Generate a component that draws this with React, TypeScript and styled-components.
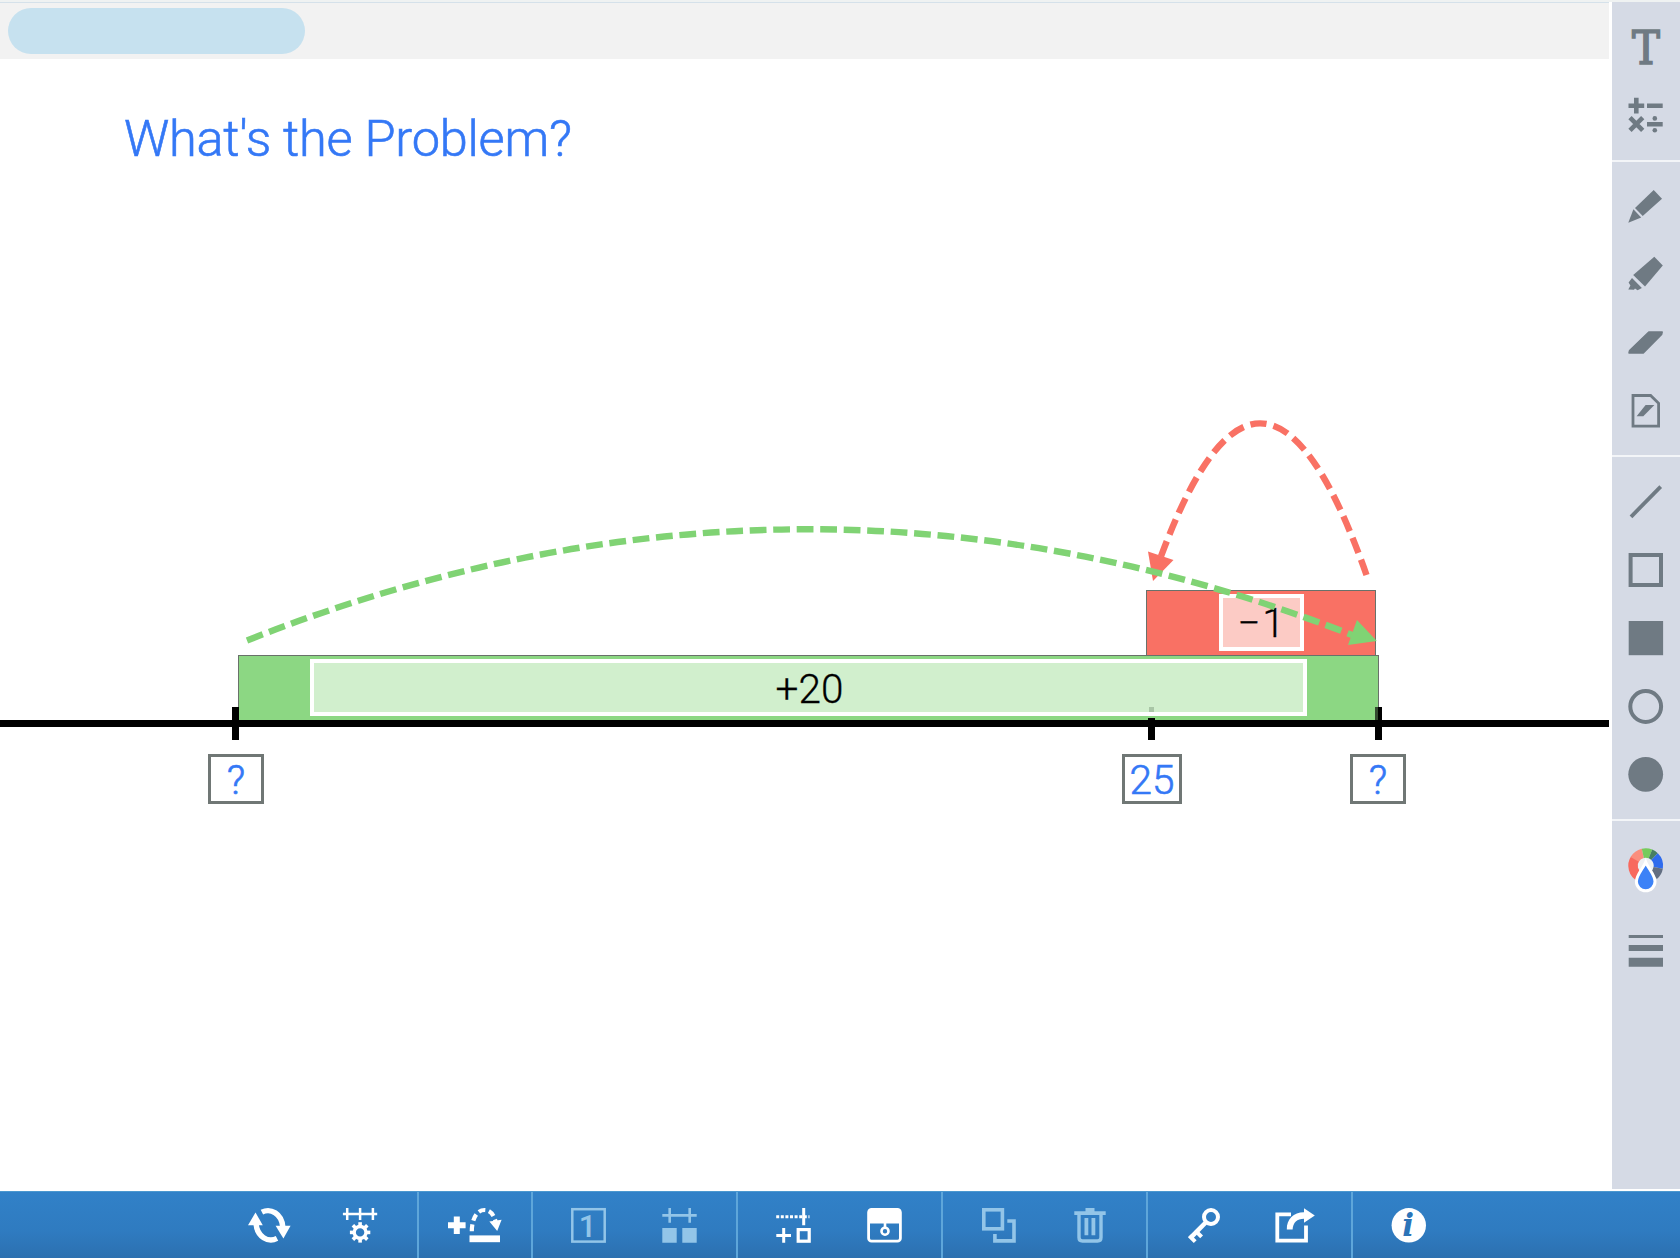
import React from "react";
import styled, { createGlobalStyle, css } from "styled-components";

const GlobalStyle = createGlobalStyle`
  * { box-sizing: border-box; }
  body { margin: 0; background: #fff; font-family: Roboto, "Liberation Sans", sans-serif; }
`;

const ink = "#6f7a83";
const blue = "#3478f6";
const dim = "#93c5e8";
const green = "#80d374";
const red = "#f97164";

const Screen = styled.div`
  display: flex;
  flex-direction: column;
  width: 1680px;
  height: 1258px;
  overflow: hidden;
  background: #fff;
`;

const Workspace = styled.div`
  flex: 1;
  display: flex;
  justify-content: space-between;
  padding: 2px 0;
  background: linear-gradient(#eff2f2 0 2px, #fff 2px);
  min-height: 0;
`;

const Board = styled.main`
  width: 1609px;
  display: flex;
  flex-direction: column;
`;

const Header = styled.header`
  height: 57px;
  padding: 5px 8px;
  background: #f2f2f2;
  border-top: 1px solid #d5e1ea;
`;

const Pill = styled.div`
  width: 297px;
  height: 46px;
  border-radius: 23px;
  background: #c6e1ef;
`;

const Canvas = styled.div`
  position: relative;
  flex: 1;
`;

const Title = styled.h1`
  margin: 0;
  padding: 50px 0 0 124px;
  font-size: 50.5px;
  line-height: 60px;
  font-weight: 300;
  letter-spacing: -0.25px;
  -webkit-text-stroke: 0.6px ${blue};
  color: ${blue};
  white-space: nowrap;
`;

const Axis = styled.div`
  position: absolute;
  left: 0;
  right: 0;
  top: 661px;
  height: 7px;
  background: #000;
`;

const Tick = styled.div<{ $x: number; $top?: number; $w?: number }>`
  position: absolute;
  left: ${(p) => p.$x}px;
  top: ${(p) => p.$top ?? 648}px;
  width: ${(p) => p.$w ?? 7}px;
  height: ${(p) => 681 - (p.$top ?? 648)}px;
  background: #000;
`;

const TickGhost = styled.div<{ $x: number; $w: number; $h: number; $fill: string }>`
  position: absolute;
  left: ${(p) => p.$x}px;
  top: 648px;
  width: ${(p) => p.$w}px;
  height: ${(p) => p.$h}px;
  background: ${(p) => p.$fill};
`;

const Bar = styled.div<{ $x: number; $y: number; $w: number; $h: number; $fill: string }>`
  position: absolute;
  left: ${(p) => p.$x}px;
  top: ${(p) => p.$y}px;
  width: ${(p) => p.$w}px;
  height: ${(p) => p.$h}px;
  display: flex;
  justify-content: center;
  align-items: flex-start;
  padding-top: 3px;
  border: 1px solid #69716a;
  background: ${(p) => p.$fill};
`;

const BarLabel = styled.div<{ $w: number; $fill: string; $nudge?: string; $gap?: number }>`
  width: ${(p) => p.$w}px;
  height: 57px;
  display: flex;
  justify-content: center;
  align-items: center;
  padding: ${(p) => p.$nudge ?? "0"};
  gap: ${(p) => p.$gap ?? 0}px;
  border: 4px solid #fff;
  background: ${(p) => p.$fill};
  font-size: 40.5px;
  line-height: 48px;
  font-weight: 300;
  -webkit-text-stroke: 0.3px #000;
  color: #000;
`;

const ValueBox = styled.div<{ $x: number; $w: number }>`
  position: absolute;
  left: ${(p) => p.$x}px;
  top: 695px;
  width: ${(p) => p.$w}px;
  height: 50px;
  display: flex;
  justify-content: center;
  align-items: center;
  padding-top: 1px;
  border: 3px solid #707775;
  background: #fff;
  font-size: 40.5px;
  line-height: 48px;
  font-weight: 300;
  -webkit-text-stroke: 0.6px ${blue};
  color: ${blue};
`;

const Arcs = styled.svg`
  position: absolute;
  left: 0;
  top: 0;
  display: block;
`;

const Sidebar = styled.aside`
  width: 68px;
  background: #d5dae5;
`;

const ToolGroup = styled.div<{ $pad?: string }>`
  display: flex;
  flex-direction: column;
  padding: ${(p) => p.$pad ?? "11px 0 11px"};
  &:not(:last-child) {
    border-bottom: 2px solid #f3f5f8;
  }
`;

const plainButton = css`
  display: flex;
  align-items: center;
  justify-content: center;
  padding: 0;
  border: 0;
  background: none;
  font-family: inherit;
`;

const ToolButton = styled.button<{ $h?: number }>`
  ${plainButton}
  width: 68px;
  height: ${(p) => p.$h ?? 68}px;
  color: ${ink};
`;

const TextGlyph = styled.span`
  padding-top: 1px;
  font-family: "DejaVu Serif Condensed", "DejaVu Serif", serif;
  font-stretch: condensed;
  font-size: 46.5px;
  line-height: 56px;
  -webkit-text-stroke: 1.5px ${ink};
`;

const Footer = styled.footer`
  height: 67px;
  display: flex;
  justify-content: center;
  padding-right: 4px;
  border-top: 1px solid #4b98cf;
  background: linear-gradient(#3181c8, #2f7bc0 60%, #2c70b0);
`;

const ActionGroup = styled.div`
  display: flex;
  padding: 0 11.5px;
  & + & {
    background: linear-gradient(#5ea6da, #5ea6da) left / 2px 100% no-repeat;
  }
`;

const ActionButton = styled.button<{ $off?: boolean }>`
  ${plainButton}
  width: 91px;
  height: 66px;
  color: ${(p) => (p.$off ? dim : "#fff")};
`;

const SideIcon = ({ children, h = 40 }: { children: React.ReactNode; h?: number }) => (
  <svg width="40" height={h} viewBox={`0 0 40 ${h}`} fill="none" stroke="none">
    {children}
  </svg>
);

const BarIcon = ({ children }: { children: React.ReactNode }) => (
  <svg width="60" height="40" viewBox="0 0 60 40" fill="none">
    {children}
  </svg>
);

const c = "currentColor";

const MathIcon = () => (
  <SideIcon>
    <path
      d="M2.5 10.7H18.2M10.3 2.8V18.5M21 10.7H36.7M21 29.3H36.7M4 22.7L16.7 35.4M16.7 22.7L4 35.4"
      stroke={c}
      strokeWidth="4.6"
    />
    <circle cx="28.8" cy="23.4" r="2.3" fill={c} />
    <circle cx="28.8" cy="35.2" r="2.3" fill={c} />
  </SideIcon>
);
const PencilIcon = () => (
  <SideIcon>
    <path d="M27.7 4L36 12.7L16.7 29.9L9 22Z" fill={c} />
    <path d="M7.4 23.3L15.2 31.5L2.3 36.7Z" fill={c} />
  </SideIcon>
);
const MarkerIcon = () => (
  <SideIcon>
    <path d="M28.3 2.7L36.8 11.5L19 32.5L7.2 20.9Z" fill={c} />
    <path d="M6 24L15.9 34L11.6 36.2L9 34.6L8 35.8L2.3 35.5L4.4 31.6L2.6 28.6Z" fill={c} />
  </SideIcon>
);
const EraserIcon = () => (
  <SideIcon>
    <path
      d="M22.8 10H36.2L35.6 12.5L17.3 31H3L3.6 28.5Z"
      fill={c}
      stroke={c}
      strokeWidth="1.5"
      strokeLinejoin="round"
    />
  </SideIcon>
);
const ClearPageIcon = () => (
  <SideIcon>
    <path d="M7 5.5H24.6L32.6 13.3V36.2H7Z" stroke={c} strokeWidth="2.8" />
    <path d="M19.6 15H28.4L17.3 26.2H10.6Z" fill={c} />
  </SideIcon>
);
const LineIcon = () => (
  <SideIcon>
    <path d="M5 34.8L34.7 4.6" stroke={c} strokeWidth="3.8" />
  </SideIcon>
);
const RectIcon = ({ filled }: { filled?: boolean }) => (
  <SideIcon>
    {filled ? (
      <rect x="2.7" y="3" width="34.4" height="34.2" fill={c} />
    ) : (
      <rect x="4.6" y="5" width="30.4" height="30" stroke={c} strokeWidth="4" />
    )}
  </SideIcon>
);
const CircleIcon = ({ filled }: { filled?: boolean }) => (
  <SideIcon>
    {filled ? (
      <circle cx="19.7" cy="20.3" r="17.4" fill={c} />
    ) : (
      <circle cx="19.7" cy="20.5" r="15.4" stroke={c} strokeWidth="4" />
    )}
  </SideIcon>
);

const wheel = [
  { from: 205, to: 305, color: "#f8695e" },
  { from: 300, to: 347, color: "#fa8e7d" },
  { from: 347, to: 382, color: "#76cb5c" },
  { from: 382, to: 404, color: "#477f62" },
  { from: 404, to: 460, color: "#2f6bed" },
  { from: 460, to: 500, color: "#626e82" },
];
const onWheel = (deg: number) => {
  const a = (deg * Math.PI) / 180;
  return `${19.7 + 12.7 * Math.sin(a)} ${19.7 - 12.7 * Math.cos(a)}`;
};
const ColorIcon = () => (
  <SideIcon h={50}>
    <circle cx="19.7" cy="19.7" r="8.5" fill="#edf0f3" />
    {wheel.map((s) => (
      <path
        key={s.from}
        d={`M${onWheel(s.from)}A12.7 12.7 0 0 1 ${onWheel(s.to)}`}
        stroke={s.color}
        strokeWidth="9.4"
      />
    ))}
    <path
      d="M19.7 16C17.5 22 10.4 29 10.4 35.5A9.3 9.3 0 0 0 29 35.5C29 29 21.9 22 19.7 16Z"
      fill="#3c82f7"
      stroke="#fff"
      strokeWidth="3"
    />
  </SideIcon>
);
const WeightIcon = () => (
  <SideIcon>
    <path d="M2.7 4H37V7H2.7ZM2.7 14H37V20H2.7ZM2.7 26.7H37V35.7H2.7Z" fill={c} />
  </SideIcon>
);

const RefreshIcon = () => (
  <BarIcon>
    <path d="M22.9 7.2C31.6 2.8 42.8 8.5 43.8 22" stroke={c} strokeWidth="5.4" />
    <path d="M36.6 20.8H51.6L44.4 33.6Z" fill={c} />
    <path d="M38 33.4C29.3 37.8 18 32 17 18.5" stroke={c} strokeWidth="5.4" />
    <path d="M9 20.2H23.8L16.5 7.4Z" fill={c} />
  </BarIcon>
);
const LineSettingsIcon = () => (
  <BarIcon>
    <path d="M12.9 8.9H47.2M17.2 3V15M30.1 3V15M42.9 3V15" stroke={c} strokeWidth="2.5" />
    <circle cx="30.1" cy="27.4" r="5.9" stroke={c} strokeWidth="3.4" />
    {[0, 45, 90, 135, 180, 225, 270, 315].map((a) => (
      <path key={a} d="M30.1 17.2V21.4" stroke={c} strokeWidth="3.6" transform={`rotate(${a} 30.1 27.4)`} />
    ))}
  </BarIcon>
);
const AddJumpIcon = () => (
  <BarIcon>
    <path d="M4 20.2H21.6M12.8 11.5V29" stroke={c} strokeWidth="6" />
    <path d="M25.5 30.4H56V37.2H25.5Z" fill={c} />
    <path
      d="M27.8 26.3C27.8 14 33 5 40.5 5C46.5 5 50 10 52 18"
      stroke={c}
      strokeWidth="4.2"
      strokeDasharray="6.8 3.8"
    />
    <path d="M45.4 16.4L57.6 14.7L53.2 26Z" fill={c} />
  </BarIcon>
);
const NumberIcon = () => (
  <BarIcon>
    <rect x="14.3" y="4.2" width="32.4" height="32.4" stroke={c} strokeWidth="2.5" />
    <text x="29.6" y="31.8" textAnchor="middle" fill={c} fontFamily="Roboto, sans-serif" fontSize="31" fontWeight="500">
      1
    </text>
  </BarIcon>
);
const BlocksIcon = () => (
  <BarIcon>
    <path d="M13.3 10.4H47.7M20.7 3V17.7M40.7 3V17.7" stroke={c} strokeWidth="2.6" />
    <path d="M13.3 23H27.7V37.7H13.3ZM33.3 23H47.7V37.7H33.3Z" fill={c} />
  </BarIcon>
);
const AddTickIcon = () => (
  <BarIcon>
    <path d="M13.2 11.8H46.5" stroke={c} strokeWidth="3" strokeDasharray="3 1.6" />
    <path d="M40.7 3V20.3M13.3 30.4H28M20.7 23V37.7" stroke={c} strokeWidth="3" />
    <rect x="35.2" y="24.6" width="11" height="11.6" stroke={c} strokeWidth="3.2" />
  </BarIcon>
);
const ShadeIcon = () => (
  <BarIcon>
    <rect x="14.6" y="4.4" width="31.8" height="31.8" rx="3" stroke={c} strokeWidth="2.8" />
    <path d="M14.6 4.4H46.4V18.4H14.6Z" fill={c} />
    <path d="M31 18V22.5" stroke={c} strokeWidth="2.6" />
    <circle cx="31" cy="26.2" r="3.5" stroke={c} strokeWidth="2.6" />
  </BarIcon>
);
const CopyIcon = () => (
  <BarIcon>
    <rect x="15.8" y="4.8" width="18.6" height="19" stroke={c} strokeWidth="3.6" />
    <path d="M39.3 16H46V35.9H26.9V29" stroke={c} strokeWidth="3.6" />
  </BarIcon>
);
const TrashIcon = () => (
  <BarIcon>
    <path d="M15.3 6.3H26.5V3H35.5V6.3H46.7V10H15.3Z" fill={c} />
    <path d="M20 9V32.5Q20 36 23.5 36H38.5Q42 36 42 32.5V9" stroke={c} strokeWidth="3.4" />
    <path d="M27.4 13V30.2M34.4 13V30.2" stroke={c} strokeWidth="3.8" />
  </BarIcon>
);
const KeyIcon = () => (
  <BarIcon>
    <circle cx="38" cy="12" r="7" stroke={c} strokeWidth="4" />
    <path d="M33.2 17L17 33.4" stroke={c} strokeWidth="4.6" />
    <path d="M16.4 30.8L22.2 36.7M23.4 26.6L28.6 31.8" stroke={c} strokeWidth="4" />
  </BarIcon>
);
const ShareIcon = () => (
  <BarIcon>
    <path d="M27 9.3H13.3V35.7H42V20.5" stroke={c} strokeWidth="3.8" />
    <path d="M40 3.3L50.8 10.6L40 17.8V13.7C33 13.8 29 17.5 28.6 24.6H22.8C22.6 14 29.5 7.4 40 7.3Z" fill={c} />
  </BarIcon>
);
const InfoIcon = () => (
  <BarIcon>
    <circle cx="30.8" cy="20.3" r="17.2" fill={c} />
    <text
      x="30.2"
      y="31.3"
      textAnchor="middle"
      fill="#2c74b8"
      fontFamily="DejaVu Serif, serif"
      fontStyle="italic"
      fontWeight="700"
      fontSize="31"
    >
      i
    </text>
  </BarIcon>
);

export default function App() {
  return (
    <Screen>
      <GlobalStyle />
      <Workspace>
        <Board>
          <Header>
            <Pill />
          </Header>
          <Canvas>
            <Title>What's the Problem?</Title>
            <Bar $x={1146} $y={531} $w={230} $h={66} $fill={red}>
              <BarLabel $w={85} $fill="#fccbc5" $gap={2}>
                <span>−</span>
                <span>1</span>
              </BarLabel>
            </Bar>
            <Bar $x={238} $y={596} $w={1141} $h={66} $fill="#8cd783">
              <BarLabel $w={997} $fill="#d1efcd" $nudge="3px 0 0 2px">+20</BarLabel>
            </Bar>
            <Axis />
            <Tick $x={232} />
            <Tick $x={1148} $top={659} />
            <TickGhost $x={1149} $w={5} $h={5} $fill="#a9c6a6" />
            <TickGhost $x={1375} $w={4} $h={13} $fill="#33482f" />
            <Tick $x={1378} $w={4} />
            <Tick $x={1375} $top={661} />
            <ValueBox $x={208} $w={56}>?</ValueBox>
            <ValueBox $x={1122} $w={60}>25</ValueBox>
            <ValueBox $x={1350} $w={56}>?</ValueBox>
            <Arcs width="1609" height="760" viewBox="0 59 1609 760" fill="none">
              <path d="M1366.5 575Q1262.75 280 1160 559" stroke={red} strokeWidth="6.4" strokeDasharray="16.2 7.2" />
              <path d="M1148 551.5L1173.5 560L1153 581Z" fill={red} />
              <path d="M247 640.5Q804.5 420 1356 636.5" stroke={green} strokeWidth="6.4" strokeDasharray="16.8 6.7" />
              <path d="M1357 620L1376.8 641L1348 645Z" fill={green} />
            </Arcs>
          </Canvas>
        </Board>
        <Sidebar>
          <ToolGroup>
            <ToolButton><TextGlyph>T</TextGlyph></ToolButton>
            <ToolButton><MathIcon /></ToolButton>
          </ToolGroup>
          <ToolGroup $pad="10px 0 11px">
            <ToolButton><PencilIcon /></ToolButton>
            <ToolButton><MarkerIcon /></ToolButton>
            <ToolButton><EraserIcon /></ToolButton>
            <ToolButton><ClearPageIcon /></ToolButton>
          </ToolGroup>
          <ToolGroup $pad="11px 0 11px">
            <ToolButton><LineIcon /></ToolButton>
            <ToolButton><RectIcon /></ToolButton>
            <ToolButton><RectIcon filled /></ToolButton>
            <ToolButton><CircleIcon /></ToolButton>
            <ToolButton><CircleIcon filled /></ToolButton>
          </ToolGroup>
          <ToolGroup $pad="10px 0 0">
            <ToolButton $h={80}><ColorIcon /></ToolButton>
            <ToolButton $h={80}><WeightIcon /></ToolButton>
          </ToolGroup>
        </Sidebar>
      </Workspace>
      <Footer>
        <ActionGroup>
          <ActionButton><RefreshIcon /></ActionButton>
          <ActionButton><LineSettingsIcon /></ActionButton>
        </ActionGroup>
        <ActionGroup>
          <ActionButton><AddJumpIcon /></ActionButton>
        </ActionGroup>
        <ActionGroup>
          <ActionButton $off><NumberIcon /></ActionButton>
          <ActionButton $off><BlocksIcon /></ActionButton>
        </ActionGroup>
        <ActionGroup>
          <ActionButton><AddTickIcon /></ActionButton>
          <ActionButton><ShadeIcon /></ActionButton>
        </ActionGroup>
        <ActionGroup>
          <ActionButton $off><CopyIcon /></ActionButton>
          <ActionButton $off><TrashIcon /></ActionButton>
        </ActionGroup>
        <ActionGroup>
          <ActionButton><KeyIcon /></ActionButton>
          <ActionButton><ShareIcon /></ActionButton>
        </ActionGroup>
        <ActionGroup>
          <ActionButton><InfoIcon /></ActionButton>
        </ActionGroup>
      </Footer>
    </Screen>
  );
}
